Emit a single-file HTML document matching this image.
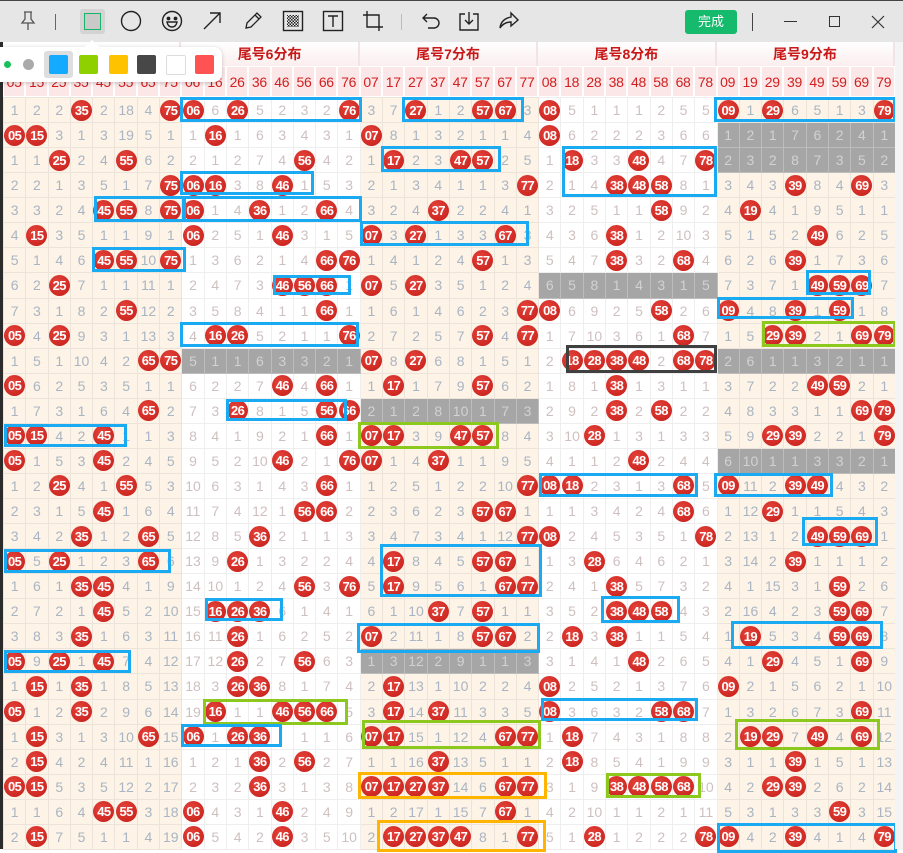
<!DOCTYPE html>
<html><head><meta charset="utf-8"><style>
*{margin:0;padding:0;box-sizing:border-box}
body{width:903px;height:849px;overflow:hidden;background:#fff;position:relative;font-family:"Liberation Sans","Noto Sans CJK SC",sans-serif}
#tb{position:absolute;left:0;top:0;width:903px;height:42px;background:#e6e6e6;border-top:1px solid #444}
#tb svg{position:absolute;top:9px}
#left{position:absolute;left:0;top:42px;width:3px;height:807px;background:#2b2b2b}
#h1{position:absolute;left:3px;top:42px;width:892px;height:24px;display:flex}
#h1 div{flex:0 0 178.4px;border-right:2px solid #f2e4e4;background:linear-gradient(#fff,#fbeeee);color:#c81818;font-weight:bold;font-size:14px;text-align:center;line-height:24px}
#h2{position:absolute;left:3px;top:66px;width:892px;height:31px;display:flex;background:#fff}
#h2 span{flex:0 0 22.3px;background:#fbe7e7;border:1px solid #fff;color:#d21f1f;font-size:14px;text-align:center;line-height:30px;letter-spacing:-0.3px}
table{position:absolute;left:3px;top:97px;border-collapse:collapse;table-layout:fixed;width:892px}
tr{height:25.07px}
td{width:22.3px;border:1px solid #ece4da;text-align:center;font-size:14px;color:#a9b5c4;padding:0;background:#fdf3e6;white-space:nowrap;overflow:visible}
td:nth-child(n+9):nth-child(-n+16),td:nth-child(n+25):nth-child(-n+32){background:#fff;color:#cfc0c0;border-color:#eee}
td.g,td:nth-child(n).g{background:#a6a6a6;color:#d2d2d2;border-color:#bdbdbd}
b{display:inline-block;width:21px;height:21px;margin:0 -1px;border-radius:50%;background:radial-gradient(circle at 40% 35%,#e4433a,#c41c18);color:#fff;font-weight:bold;font-size:13px;line-height:21px;letter-spacing:-0.6px;vertical-align:middle}
.x{position:absolute;border:3px solid #19aaf2}
.gr{border-color:#8dc81e}.or{border-color:#ffb400}.bk{border-color:#404040}
#pop{position:absolute;left:0;top:47px;width:222px;height:35px;background:#fff;border-radius:0 8px 8px 0;box-shadow:0 1px 4px rgba(0,0,0,.2)}
#pop:before{content:"";position:absolute;left:85px;top:-7px;border:7px solid transparent;border-top:0;border-bottom-color:#fff}
#pop i{position:absolute;display:block}
#done{position:absolute;left:685px;top:9px;width:52px;height:24px;background:#15ba6c;border-radius:3px;color:#fff;font-size:13px;text-align:center;line-height:24px}
</style></head><body>
<div id="tb">
<svg style="left:18px" width="20" height="22" viewBox="0 0 20 22" fill="none" stroke="#555" stroke-width="1.3"><path d="M6 2h8M7 2v7l-3 4h12l-3-4V2M10 13v7"/></svg>
<div style="position:absolute;left:55px;top:13px;width:1px;height:16px;background:#666"></div>
<div style="position:absolute;left:80px;top:8px;width:25px;height:25px;background:#d3d3d3;border-radius:3px"></div>
<div style="position:absolute;left:84px;top:12px;width:17px;height:17px;background:#c9c9c9;border:1.5px solid #1bb36a"></div>
<svg style="left:120px" width="22" height="22" fill="none" stroke="#222" stroke-width="1.4"><circle cx="11" cy="11" r="9.5"/></svg>
<svg style="left:161px" width="22" height="22" fill="none" stroke="#222" stroke-width="1.4"><circle cx="11" cy="11" r="9.5"/><circle cx="7.5" cy="8.5" r="1.2" fill="#222"/><circle cx="14.5" cy="8.5" r="1.2" fill="#222"/><path d="M6 12h10q-1 5-5 5t-5-5z"/></svg>
<svg style="left:201px" width="22" height="22" fill="none" stroke="#222" stroke-width="1.4"><path d="M3 19L19 3M9 3h10v10"/></svg>
<svg style="left:242px" width="22" height="22" fill="none" stroke="#222" stroke-width="1.3"><path d="M4 18l1-5L15 3l4 4L9 17zM13 5l4 4"/></svg>
<svg style="left:282px" width="22" height="22"><rect x="1.5" y="1.5" width="19" height="19" fill="none" stroke="#222" stroke-width="1.4"/><pattern id="p" width="3" height="3" patternUnits="userSpaceOnUse"><rect width="1.5" height="1.5" fill="#222"/><rect x="1.5" y="1.5" width="1.5" height="1.5" fill="#222"/></pattern><rect x="5" y="5" width="12" height="12" fill="url(#p)"/></svg>
<svg style="left:322px" width="22" height="22" fill="none" stroke="#222" stroke-width="1.4"><rect x="1.5" y="1.5" width="19" height="19"/><path d="M6 6h10M11 6v11"/></svg>
<svg style="left:362px" width="22" height="22" fill="none" stroke="#222" stroke-width="1.4"><path d="M5 1v16h16M1 5h16v16"/></svg>
<div style="position:absolute;left:401px;top:13px;width:1px;height:16px;background:#bbb"></div>
<svg style="left:420px" width="22" height="22" fill="none" stroke="#222" stroke-width="1.4"><path d="M3 8h11a5 5 0 010 10H8M7 4L3 8l4 4"/></svg>
<svg style="left:458px" width="22" height="22" fill="none" stroke="#222" stroke-width="1.4"><path d="M7 4H2v16h18V4h-5M11 2v12M7 10l4 4 4-4"/></svg>
<svg style="left:498px" width="22" height="22" fill="none" stroke="#222" stroke-width="1.4"><path d="M13 3l7 7-7 6v-4q-7 0-11 6 1-9 11-11z"/></svg>
<div id="done">完成</div>
<div style="position:absolute;left:752px;top:12px;width:1px;height:18px;background:#444"></div>
<div style="position:absolute;left:784px;top:20px;width:13px;height:1px;background:#333"></div>
<div style="position:absolute;left:829px;top:15px;width:11px;height:11px;border:1px solid #333"></div>
<svg style="left:870px;top:13px" width="16" height="16" stroke="#333" stroke-width="1.2"><path d="M2 2l12 12M14 2L2 14"/></svg>
</div>
<div id="left"></div>
<div id="h1"><div></div><div>尾号6分布</div><div>尾号7分布</div><div>尾号8分布</div><div style="flex-basis:178.8px">尾号9分布</div></div>
<div id="h2"><span>05</span><span>15</span><span>25</span><span>35</span><span>45</span><span>55</span><span>65</span><span>75</span><span>06</span><span>16</span><span>26</span><span>36</span><span>46</span><span>56</span><span>66</span><span>76</span><span>07</span><span>17</span><span>27</span><span>37</span><span>47</span><span>57</span><span>67</span><span>77</span><span>08</span><span>18</span><span>28</span><span>38</span><span>48</span><span>58</span><span>68</span><span>78</span><span>09</span><span>19</span><span>29</span><span>39</span><span>49</span><span>59</span><span>69</span><span>79</span></div>
<table>
<tr><td>1<td>2<td>2<td><b>35</b><td>2<td>18<td>4<td><b>75</b><td><b>06</b><td>6<td><b>26</b><td>5<td>2<td>3<td>2<td><b>76</b><td>3<td>7<td><b>27</b><td>1<td>2<td><b>57</b><td><b>67</b><td>3<td><b>08</b><td>5<td>1<td>1<td>1<td>2<td>5<td>5<td><b>09</b><td>1<td><b>29</b><td>6<td>5<td>1<td>3<td><b>79</b></tr>
<tr><td><b>05</b><td><b>15</b><td>3<td>1<td>3<td>19<td>5<td>1<td>1<td><b>16</b><td>1<td>6<td>3<td>4<td>3<td>1<td><b>07</b><td>8<td>1<td>3<td>2<td>1<td>1<td>4<td><b>08</b><td>6<td>2<td>2<td>2<td>3<td>6<td>6<td class=g>1<td class=g>2<td class=g>1<td class=g>7<td class=g>6<td class=g>2<td class=g>4<td class=g>1</tr>
<tr><td>1<td>1<td><b>25</b><td>2<td>4<td><b>55</b><td>6<td>2<td>2<td>1<td>2<td>7<td>4<td><b>56</b><td>4<td>2<td>1<td><b>17</b><td>2<td>3<td><b>47</b><td><b>57</b><td>2<td>5<td>1<td><b>18</b><td>3<td>3<td><b>48</b><td>4<td>7<td><b>78</b><td class=g>2<td class=g>3<td class=g>2<td class=g>8<td class=g>7<td class=g>3<td class=g>5<td class=g>2</tr>
<tr><td>2<td>2<td>1<td>3<td>5<td>1<td>7<td><b>75</b><td><b>06</b><td><b>16</b><td>3<td>8<td><b>46</b><td>1<td>5<td>3<td>2<td>1<td>3<td>4<td>1<td>1<td>3<td><b>77</b><td>2<td>1<td>4<td><b>38</b><td><b>48</b><td><b>58</b><td>8<td>1<td>3<td>4<td>3<td><b>39</b><td>8<td>4<td><b>69</b><td>3</tr>
<tr><td>3<td>3<td>2<td>4<td><b>45</b><td><b>55</b><td>8<td><b>75</b><td><b>06</b><td>1<td>4<td><b>36</b><td>1<td>2<td><b>66</b><td>4<td>3<td>2<td>4<td><b>37</b><td>2<td>2<td>4<td>1<td>3<td>2<td>5<td>1<td>1<td><b>58</b><td>9<td>2<td>4<td><b>19</b><td>4<td>1<td>9<td>5<td>1<td>1</tr>
<tr><td>4<td><b>15</b><td>3<td>5<td>1<td>1<td>9<td>1<td><b>06</b><td>2<td>5<td>1<td><b>46</b><td>3<td>1<td>5<td><b>07</b><td>3<td><b>27</b><td>1<td>3<td>3<td><b>67</b><td>3<td>4<td>3<td>6<td><b>38</b><td>1<td>2<td>10<td>3<td>5<td>1<td>5<td>2<td><b>49</b><td>6<td>2<td>5</tr>
<tr><td>5<td>1<td>4<td>6<td><b>45</b><td><b>55</b><td>10<td><b>75</b><td>1<td>3<td>6<td>2<td>1<td>4<td><b>66</b><td><b>76</b><td>1<td>4<td>1<td>2<td>4<td><b>57</b><td>1<td>3<td>5<td>4<td>7<td><b>38</b><td>3<td>2<td><b>68</b><td>4<td>6<td>2<td>6<td><b>39</b><td>1<td>7<td>3<td>6</tr>
<tr><td>6<td>2<td><b>25</b><td>7<td>1<td>1<td>11<td>1<td>2<td>4<td>7<td>3<td><b>46</b><td><b>56</b><td><b>66</b><td>1<td><b>07</b><td>5<td><b>27</b><td>3<td>5<td>1<td>2<td>4<td class=g>6<td class=g>5<td class=g>8<td class=g>1<td class=g>4<td class=g>3<td class=g>1<td class=g>5<td>7<td>3<td>7<td>1<td><b>49</b><td><b>59</b><td><b>69</b><td>7</tr>
<tr><td>7<td>3<td>1<td>8<td>2<td><b>55</b><td>12<td>2<td>3<td>5<td>8<td>4<td>1<td>1<td><b>66</b><td>1<td>1<td>6<td>1<td>4<td>6<td>2<td>3<td><b>77</b><td><b>08</b><td>6<td>9<td>2<td>5<td><b>58</b><td>2<td>6<td><b>09</b><td>4<td>8<td><b>39</b><td>1<td><b>59</b><td>1<td>8</tr>
<tr><td><b>05</b><td>4<td><b>25</b><td>9<td>3<td>1<td>13<td>3<td>4<td><b>16</b><td><b>26</b><td>5<td>2<td>1<td>1<td><b>76</b><td>2<td>7<td>2<td>5<td>7<td><b>57</b><td>4<td><b>77</b><td>1<td>7<td>10<td>3<td>6<td>1<td><b>68</b><td>7<td>1<td>5<td><b>29</b><td><b>39</b><td>2<td>1<td><b>69</b><td><b>79</b></tr>
<tr><td>1<td>5<td>1<td>10<td>4<td>2<td><b>65</b><td><b>75</b><td class=g>5<td class=g>1<td class=g>1<td class=g>6<td class=g>3<td class=g>3<td class=g>2<td class=g>1<td><b>07</b><td>8<td><b>27</b><td>6<td>8<td>1<td>5<td>1<td>2<td><b>18</b><td><b>28</b><td><b>38</b><td><b>48</b><td>2<td><b>68</b><td><b>78</b><td class=g>2<td class=g>6<td class=g>1<td class=g>1<td class=g>3<td class=g>2<td class=g>1<td class=g>1</tr>
<tr><td><b>05</b><td>6<td>2<td>5<td>3<td>5<td>1<td>1<td>6<td>2<td>2<td>7<td><b>46</b><td>4<td><b>66</b><td>1<td>1<td><b>17</b><td>1<td>7<td>9<td><b>57</b><td>6<td>2<td>1<td>8<td>1<td><b>38</b><td>1<td>3<td>1<td>1<td>3<td>7<td>2<td>2<td><b>49</b><td><b>59</b><td>2<td>1</tr>
<tr><td>1<td>7<td>3<td>1<td>6<td>4<td><b>65</b><td>2<td>7<td>3<td><b>26</b><td>8<td>1<td>5<td><b>56</b><td><b>66</b><td class=g>2<td class=g>1<td class=g>2<td class=g>8<td class=g>10<td class=g>1<td class=g>7<td class=g>3<td>2<td>9<td>2<td><b>38</b><td>2<td><b>58</b><td>2<td>2<td>4<td>8<td>3<td>3<td>1<td>1<td><b>69</b><td><b>79</b></tr>
<tr><td><b>05</b><td><b>15</b><td>4<td>2<td><b>45</b><td>1<td>1<td>3<td>8<td>4<td>1<td>9<td>2<td>1<td><b>66</b><td>1<td><b>07</b><td><b>17</b><td>3<td>9<td><b>47</b><td><b>57</b><td>8<td>4<td>3<td>10<td><b>28</b><td>1<td>3<td>1<td>3<td>3<td>5<td>9<td><b>29</b><td><b>39</b><td>2<td>2<td>1<td><b>79</b></tr>
<tr><td><b>05</b><td>1<td>5<td>3<td><b>45</b><td>2<td>4<td>5<td>9<td>5<td>2<td>10<td><b>46</b><td>2<td>1<td><b>76</b><td><b>07</b><td>1<td>4<td><b>37</b><td>1<td>1<td>9<td>5<td>4<td>1<td>1<td>2<td><b>48</b><td>2<td>4<td>4<td class=g>6<td class=g>10<td class=g>1<td class=g>1<td class=g>3<td class=g>3<td class=g>2<td class=g>1</tr>
<tr><td>1<td>2<td><b>25</b><td>4<td>1<td><b>55</b><td>5<td>3<td>10<td>6<td>3<td>1<td>4<td>3<td><b>66</b><td>1<td>1<td>2<td>5<td>1<td>2<td>2<td>10<td><b>77</b><td><b>08</b><td><b>18</b><td>2<td>3<td>1<td>3<td><b>68</b><td>5<td><b>09</b><td>11<td>2<td><b>39</b><td><b>49</b><td>4<td>3<td>2</tr>
<tr><td>2<td>3<td>1<td>5<td><b>45</b><td>1<td>6<td>4<td>11<td>7<td>4<td>12<td>1<td><b>56</b><td><b>66</b><td>2<td>2<td>3<td>6<td>2<td>3<td><b>57</b><td><b>67</b><td>1<td>1<td>1<td>3<td>4<td>2<td>4<td><b>68</b><td>6<td>1<td>12<td><b>29</b><td>1<td>1<td>5<td>4<td>3</tr>
<tr><td>3<td>4<td>2<td><b>35</b><td>1<td>2<td><b>65</b><td>5<td>12<td>8<td>5<td><b>36</b><td>2<td>1<td>1<td>3<td>3<td>4<td>7<td>3<td>4<td>1<td>12<td><b>77</b><td><b>08</b><td>2<td>4<td>5<td>3<td>5<td>1<td><b>78</b><td>2<td>13<td>1<td>2<td><b>49</b><td><b>59</b><td><b>69</b><td>1</tr>
<tr><td><b>05</b><td>5<td><b>25</b><td>1<td>2<td>3<td><b>65</b><td>6<td>13<td>9<td><b>26</b><td>1<td>3<td>2<td>2<td>4<td>4<td><b>17</b><td>8<td>4<td>5<td><b>57</b><td><b>67</b><td>1<td>1<td>3<td><b>28</b><td>6<td>4<td>6<td>2<td>1<td>3<td>14<td>2<td><b>39</b><td>1<td>1<td>1<td>2</tr>
<tr><td>1<td>6<td>1<td><b>35</b><td><b>45</b><td>4<td>1<td>9<td>14<td>10<td>1<td>2<td>4<td><b>56</b><td>3<td><b>76</b><td>5<td><b>17</b><td>9<td>5<td>6<td>1<td><b>67</b><td><b>77</b><td>2<td>4<td>1<td><b>38</b><td>5<td>7<td>3<td>2<td>4<td>1<td>15<td>3<td>1<td><b>59</b><td>2<td>6</tr>
<tr><td>2<td>7<td>2<td>1<td><b>45</b><td>5<td>2<td>10<td>15<td><b>16</b><td><b>26</b><td><b>36</b><td>6<td>1<td>4<td>1<td>6<td>1<td>10<td><b>37</b><td>7<td><b>57</b><td>1<td>1<td>3<td>5<td>2<td><b>38</b><td><b>48</b><td><b>58</b><td>4<td>3<td>2<td>16<td>4<td>2<td>3<td><b>59</b><td><b>69</b><td>7</tr>
<tr><td>3<td>8<td>3<td><b>35</b><td>1<td>6<td>3<td>11<td>16<td>11<td><b>26</b><td>1<td>6<td>2<td>5<td>2<td><b>07</b><td>2<td>11<td>1<td>8<td><b>57</b><td><b>67</b><td>2<td>2<td><b>18</b><td>3<td><b>38</b><td>1<td>1<td>5<td>4<td>1<td><b>19</b><td>5<td>3<td>4<td><b>59</b><td><b>69</b><td>8</tr>
<tr><td><b>05</b><td>9<td><b>25</b><td>1<td><b>45</b><td>7<td>4<td>12<td>17<td>12<td><b>26</b><td>2<td>7<td><b>56</b><td>6<td>3<td class=g>1<td class=g>3<td class=g>12<td class=g>2<td class=g>9<td class=g>1<td class=g>1<td class=g>3<td>3<td>1<td>4<td>1<td><b>48</b><td>2<td>6<td>5<td>4<td>1<td><b>29</b><td>4<td>5<td>1<td><b>69</b><td>9</tr>
<tr><td>1<td><b>15</b><td>1<td><b>35</b><td>1<td>8<td>5<td>13<td>18<td>3<td><b>26</b><td><b>36</b><td>8<td>1<td>7<td>4<td>2<td><b>17</b><td>13<td>1<td>10<td>2<td>2<td>4<td><b>08</b><td>2<td>5<td>2<td>1<td>3<td>7<td>6<td><b>09</b><td>2<td>1<td>5<td>6<td>2<td>1<td>10</tr>
<tr><td><b>05</b><td>1<td>2<td><b>35</b><td>2<td>9<td>6<td>14<td>19<td><b>16</b><td>1<td>1<td><b>46</b><td><b>56</b><td><b>66</b><td>5<td>3<td><b>17</b><td>14<td><b>37</b><td>11<td>3<td>3<td>5<td><b>08</b><td>3<td>6<td>3<td>2<td><b>58</b><td><b>68</b><td>7<td>1<td>3<td>2<td>6<td>7<td>3<td><b>69</b><td>11</tr>
<tr><td>1<td><b>15</b><td>3<td>1<td>3<td>10<td><b>65</b><td>15<td><b>06</b><td>1<td><b>26</b><td><b>36</b><td> <td>1<td>1<td>6<td><b>07</b><td><b>17</b><td>15<td>1<td>12<td>4<td><b>67</b><td><b>77</b><td>1<td><b>18</b><td>7<td>4<td>3<td>1<td>8<td>8<td>2<td><b>19</b><td><b>29</b><td>7<td><b>49</b><td>4<td><b>69</b><td>12</tr>
<tr><td>2<td><b>15</b><td>4<td>2<td>4<td>11<td>1<td>16<td>1<td>2<td>1<td><b>36</b><td>2<td><b>56</b><td>2<td>7<td>1<td>1<td>16<td><b>37</b><td>13<td>5<td>1<td>1<td>2<td><b>18</b><td>8<td>5<td>4<td>1<td>9<td>9<td>3<td>1<td>1<td><b>39</b><td>1<td>5<td>1<td>13</tr>
<tr><td><b>05</b><td><b>15</b><td>5<td>3<td>5<td>12<td>2<td>17<td>2<td>3<td>2<td><b>36</b><td>3<td>1<td>3<td>8<td><b>07</b><td><b>17</b><td><b>27</b><td><b>37</b><td>14<td>6<td><b>67</b><td><b>77</b><td>3<td>1<td>9<td><b>38</b><td><b>48</b><td><b>58</b><td><b>68</b><td>10<td>4<td>2<td><b>29</b><td><b>39</b><td>2<td>6<td>2<td>14</tr>
<tr><td>1<td>1<td>6<td>4<td><b>45</b><td><b>55</b><td>3<td>18<td><b>06</b><td>4<td>3<td>1<td><b>46</b><td>2<td>4<td>9<td>1<td>2<td>17<td>1<td>15<td>7<td><b>67</b><td>1<td>4<td>2<td>10<td>1<td>1<td>2<td>1<td>11<td>5<td>3<td>1<td>3<td>3<td><b>59</b><td>3<td>15</tr>
<tr><td>2<td><b>15</b><td>7<td>5<td>1<td>1<td>4<td>19<td><b>06</b><td>5<td>4<td>2<td><b>46</b><td>3<td>5<td>10<td>2<td><b>17</b><td><b>27</b><td><b>37</b><td><b>47</b><td>8<td>1<td><b>77</b><td>5<td>1<td><b>28</b><td>1<td>2<td>2<td>2<td><b>78</b><td><b>09</b><td>4<td>2<td><b>39</b><td>4<td>1<td>4<td><b>79</b></tr>
</table>
<div class="x" style="left:180px;top:97px;width:182px;height:25px"></div>
<div class="x" style="left:402px;top:97px;width:122px;height:25px"></div>
<div class="x" style="left:714px;top:97px;width:182px;height:25px"></div>
<div class="x" style="left:381px;top:146px;width:120px;height:26px"></div>
<div class="x" style="left:562px;top:146px;width:155px;height:51px"></div>
<div class="x" style="left:180px;top:171px;width:134px;height:24px"></div>
<div class="x" style="left:94px;top:196px;width:91px;height:26px"></div>
<div class="x" style="left:183px;top:196px;width:179px;height:26px"></div>
<div class="x" style="left:360px;top:221px;width:169px;height:25px"></div>
<div class="x" style="left:92px;top:247px;width:94px;height:25px"></div>
<div class="x" style="left:273px;top:275px;width:78px;height:20px"></div>
<div class="x" style="left:806px;top:270px;width:65px;height:25px"></div>
<div class="x" style="left:717px;top:297px;width:137px;height:22px"></div>
<div class="x gr" style="left:762px;top:321px;width:134px;height:26px"></div>
<div class="x" style="left:180px;top:322px;width:179px;height:25px"></div>
<div class="x bk" style="left:566px;top:345px;width:151px;height:28px"></div>
<div class="x" style="left:226px;top:399px;width:121px;height:22px"></div>
<div class="x gr" style="left:358px;top:422px;width:141px;height:27px"></div>
<div class="x" style="left:4px;top:424px;width:123px;height:23px"></div>
<div class="x" style="left:539px;top:473px;width:159px;height:24px"></div>
<div class="x" style="left:714px;top:473px;width:119px;height:24px"></div>
<div class="x" style="left:802px;top:517px;width:76px;height:29px"></div>
<div class="x" style="left:4px;top:549px;width:167px;height:24px"></div>
<div class="x" style="left:380px;top:544px;width:162px;height:53px"></div>
<div class="x" style="left:205px;top:598px;width:78px;height:23px"></div>
<div class="x" style="left:601px;top:596px;width:79px;height:27px"></div>
<div class="x" style="left:357px;top:623px;width:183px;height:30px"></div>
<div class="x" style="left:731px;top:621px;width:152px;height:28px"></div>
<div class="x" style="left:4px;top:650px;width:127px;height:23px"></div>
<div class="x" style="left:541px;top:698px;width:157px;height:23px"></div>
<div class="x gr" style="left:203px;top:699px;width:145px;height:26px"></div>
<div class="x" style="left:181px;top:724px;width:101px;height:23px"></div>
<div class="x gr" style="left:362px;top:720px;width:179px;height:29px"></div>
<div class="x gr" style="left:735px;top:719px;width:145px;height:31px"></div>
<div class="x or" style="left:358px;top:772px;width:189px;height:27px"></div>
<div class="x gr" style="left:606px;top:773px;width:95px;height:25px"></div>
<div class="x or" style="left:377px;top:820px;width:169px;height:32px"></div>
<div class="x" style="left:717px;top:823px;width:180px;height:30px"></div>
<div style="position:absolute;left:895px;top:42px;width:8px;height:807px;background:#f4f4f4"></div>
<div id="pop">
<i style="left:4px;top:14px;width:7px;height:7px;border-radius:50%;background:#19c15a"></i>
<i style="left:23px;top:12px;width:11px;height:11px;border-radius:50%;background:#aaa"></i>
<i style="left:44px;top:4px;width:29px;height:27px;border-radius:3px;background:#dedede"></i>
<i style="left:49px;top:8px;width:19px;height:19px;border-radius:2px;background:#14aaff"></i>
<i style="left:79px;top:8px;width:19px;height:19px;border-radius:2px;background:#8ed000"></i>
<i style="left:109px;top:8px;width:19px;height:19px;border-radius:2px;background:#ffc200"></i>
<i style="left:137px;top:8px;width:19px;height:19px;border-radius:2px;background:#474747"></i>
<i style="left:166px;top:8px;width:20px;height:20px;border-radius:2px;background:#fff;border:1px solid #ddd"></i>
<i style="left:195px;top:8px;width:19px;height:19px;border-radius:2px;background:#ff5252"></i>
</div>
</body></html>
